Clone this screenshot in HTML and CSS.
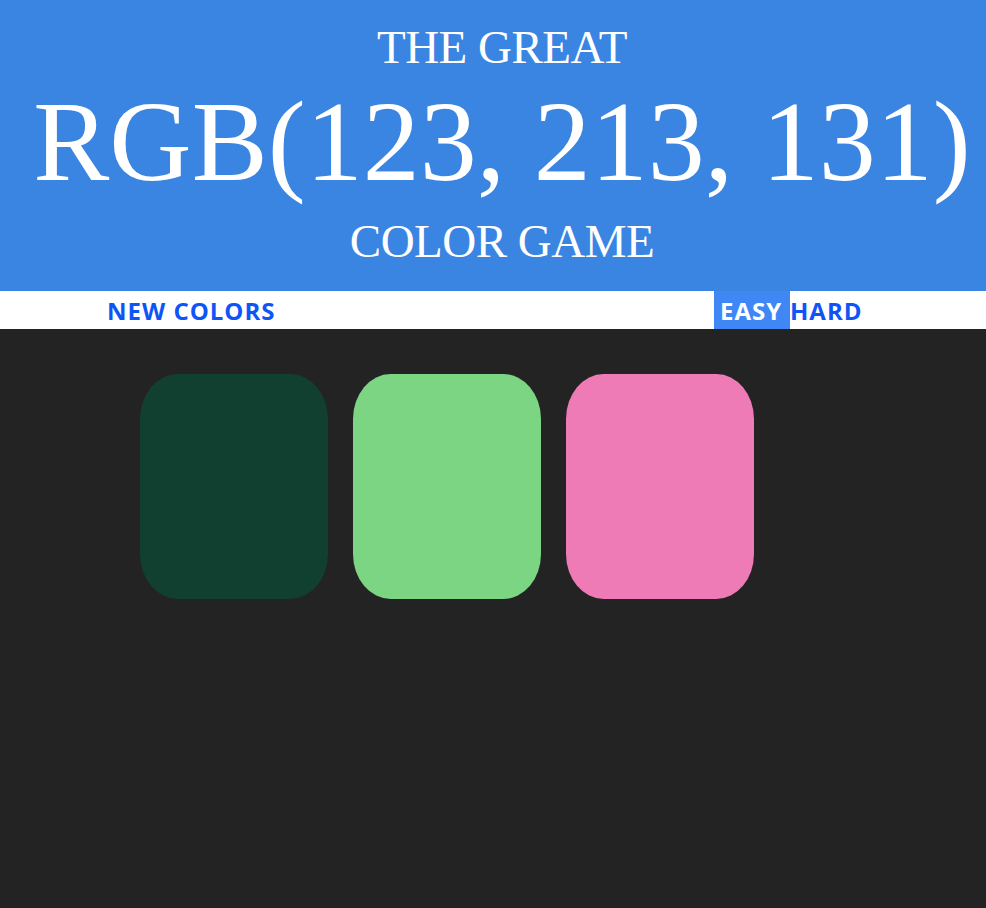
FILE: index.html
```html
<!DOCTYPE html>
<html lang="en">
<head>
<meta charset="utf-8">
<title>Color Game</title>
<link rel="stylesheet" href="styles.css">
</head>
<body>
<header class="banner">
  <h1 class="title">
    <span class="title-line title-small">THE GREAT</span>
    <span class="title-line title-big">RGB(123, 213, 131)</span>
    <span class="title-line title-small">COLOR GAME</span>
  </h1>
</header>
<nav class="stripe">
  <button class="btn btn-new">NEW COLORS</button>
  <span class="spacer"></span>
  <button class="btn btn-mode selected">EASY</button>
  <button class="btn btn-mode btn-hard">HARD</button>
</nav>
<main class="board">
  <div class="square sq-dark"></div>
  <div class="square sq-green"></div>
  <div class="square sq-pink"></div>
</main>
</body>
</html>
```
FILE: styles.css
```css
html, body {
  margin: 0;
  padding: 0;
}
body {
  background: #232323;
  min-height: 908px;
}
.banner {
  background: #3b85e2;
  height: 291px;
  box-sizing: border-box;
  padding: 24px 0 0 18px;
  color: #ffffff;
  text-align: center;
}
.title {
  margin: 0;
  font-family: "Liberation Serif", "Times New Roman", serif;
  font-weight: normal;
  display: flex;
  flex-direction: column;
  align-items: center;
}
.title-line {
  display: block;
  line-height: 1;
}
.title-small {
  font-size: 47px;
  letter-spacing: -0.5px;
}
.title-big {
  font-size: 114px;
  margin: 14px 0 19px;
}
.stripe {
  background: #ffffff;
  height: 38px;
  display: flex;
  align-items: stretch;
  padding: 0 0 0 107px;
}
.btn {
  border: none;
  background: none;
  margin: 0;
  padding: 0;
  font-family: "Open Sans", "Liberation Sans", sans-serif;
  font-weight: 700;
  font-size: 24px;
  letter-spacing: 1px;
  color: #0f55f6;
  line-height: 40px;
  cursor: pointer;
  white-space: nowrap;
}
.spacer {
  flex: 1;
}
.btn-mode {
  text-align: left;
}
.selected {
  background: #3f87f5;
  color: #ffffff;
  width: 76px;
  padding: 0 0 0 6px;
}
.btn-hard {
  width: 196px;
}
.board {
  display: flex;
  gap: 25px;
  padding: 45px 0 0 140px;
}
.square {
  width: 188px;
  height: 225px;
  border-radius: 20%;
}
.sq-dark { background: #113f30; }
.sq-green { background: #7bd583; }
.sq-pink { background: #ee7bb6; }
```
